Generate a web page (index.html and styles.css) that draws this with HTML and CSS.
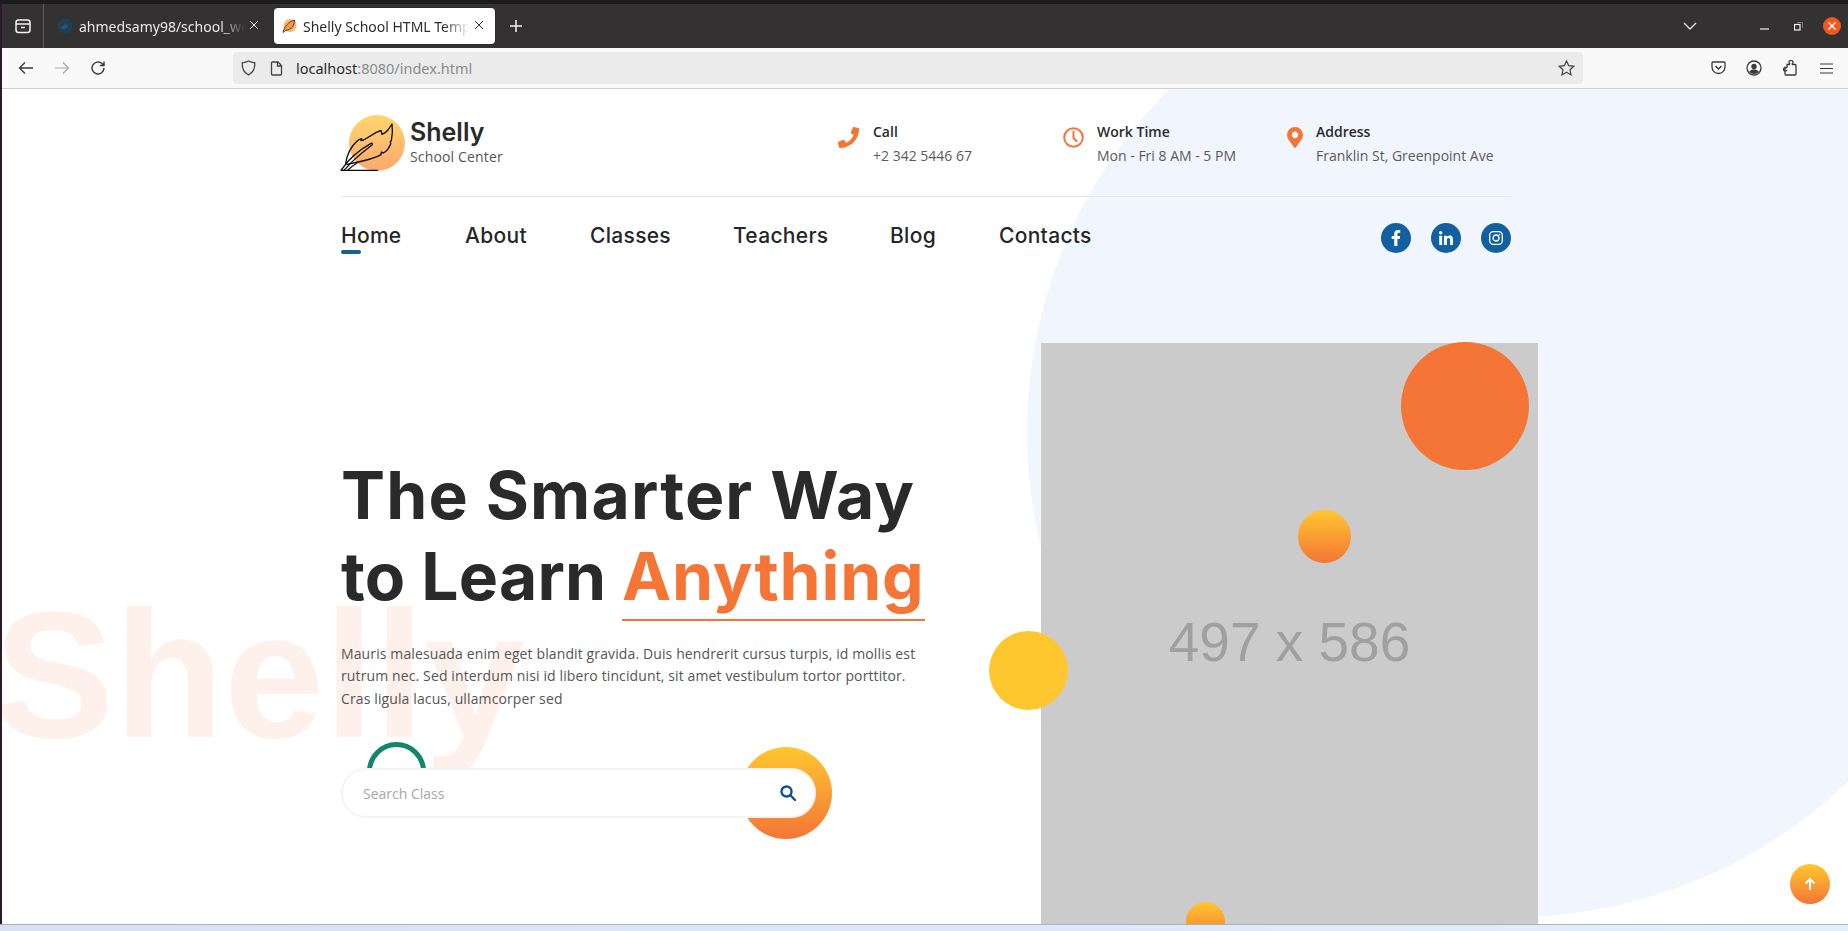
FILE: index.html
```html
<!DOCTYPE html>
<html lang="en">
<head>
<meta charset="utf-8">
<title>Shelly School HTML Template</title>
<link rel="stylesheet" href="styles.css">
</head>
<body>
<div class="topline"></div>
<div class="window">
  <div class="tabbar">
    <div class="tabmgr">
      <svg width="16" height="16" viewBox="0 0 16 16" fill="none" stroke="#f4f4f4" stroke-width="1.5"><rect x="1" y="2" width="14" height="12.5" rx="2.5"/><path d="M1 6h14M6 9.5h4"/></svg>
    </div>
    <div class="tab tab-inactive">
      <svg class="tabicon" width="16" height="16" viewBox="0 0 16 16"><circle cx="8" cy="8" r="7.5" fill="#1d4056"/><path d="M3.5 9c2 3.5 6 3 8.500-3l-2.800 1.500-1.200-3.200-1 3z" fill="#2f5670"/></svg>
      <span class="tabtext">ahmedsamy98/school_website</span>
      <svg class="tabclose" width="10" height="10" viewBox="0 0 10 10" stroke="#e8e8e8" stroke-width="1"><path d="M1 1l8 8M9 1l-8 8"/></svg>
    </div>
    <div class="tab tab-active">
      <svg class="tabicon" width="16" height="16" viewBox="0 0 16 16"><circle cx="9" cy="7.500" r="6.500" fill="#fdb96b"/><path d="M2 14.500C3 9 7 4 13.500 2 13.500 8 10 12 4.500 12.500L2 14.500z" fill="#f59a45" stroke="#222" stroke-width=".8"/></svg>
      <span class="tabtext tabtext-dark">Shelly School HTML Template</span>
      <svg class="tabclose" width="10" height="10" viewBox="0 0 10 10" stroke="#333" stroke-width="1"><path d="M1 1l8 8M9 1l-8 8"/></svg>
    </div>
    <svg class="newtab" width="14" height="14" viewBox="0 0 14 14" stroke="#f4f4f4" stroke-width="1.500"><path d="M7 1v12M1 7h12"/></svg>
    <div class="winctrl">
      <svg class="chev" width="14" height="8" viewBox="0 0 14 8" fill="none" stroke="#e8e8e8" stroke-width="1.300"><path d="M1 1l6 6 6-6"/></svg>
      <svg class="winmin" width="9" height="2" viewBox="0 0 9 2"><rect width="9" height="1.200" y=".4" fill="#f0f0f0"/></svg>
      <svg class="winmax" width="9" height="9" viewBox="0 0 9 9" fill="none" stroke="#f0f0f0"><rect x=".5" y="2.500" width="5.500" height="5.500" stroke-width="1.200"/><path d="M3 .5h5.500V6" stroke-width=".6" stroke="#aaa"/></svg>
      <div class="winclose"><svg width="8" height="8" viewBox="0 0 8 8" stroke="#fff" stroke-width="1.300"><path d="M.5.5l7 7M7.500.5l-7 7"/></svg></div>
    </div>
  </div>

  <div class="toolbar">
    <div class="navbtns">
      <svg width="16" height="14" viewBox="0 0 16 14" fill="none" stroke="#3a3a3a" stroke-width="1.300"><path d="M15 7H1.500M7 1.500L1.500 7 7 12.500"/></svg>
      <svg width="16" height="14" viewBox="0 0 16 14" fill="none" stroke="#a8a8a8" stroke-width="1.200"><path d="M1 7h13.500M9 1.500L14.500 7 9 12.500"/></svg>
      <svg width="16" height="16" viewBox="0 0 16 16" fill="none" stroke="#3a3a3a" stroke-width="1.400"><path d="M14 8a6 6 0 1 1-2-4.500L14 5.500M14 1.500v4h-4"/></svg>
    </div>
    <div class="urlbar">
      <svg class="urlshield" width="15" height="16" viewBox="0 0 15 16" fill="none" stroke="#444" stroke-width="1.300"><path d="M7.500 1C5.500 2.200 3.500 2.600 1.200 2.800 1 8 2.500 12.500 7.500 15c5-2.500 6.500-7 6.300-12.200C11.500 2.600 9.500 2.200 7.500 1z"/></svg>
      <svg class="urldoc" width="13" height="15" viewBox="0 0 13 15" fill="none" stroke="#444" stroke-width="1.300"><path d="M2.500 1H8l3.500 3.500V13a1 1 0 0 1-1 1h-8a1 1 0 0 1-1-1V2a1 1 0 0 1 1-1z"/><path d="M7.500 1v4h4"/></svg>
      <span class="urltext">localhost<span class="urlrest">:8080/index.html</span></span>
      <svg class="urlstar" width="17" height="16" viewBox="0 0 17 16" fill="none" stroke="#444" stroke-width="1.200"><path d="M8.500 1l2.200 4.700 5.100.6-3.800 3.500 1 5.100-4.500-2.600L4 14.900l1-5.100L1.200 6.300l5.100-.6z"/></svg>
    </div>
    <div class="tools">
      <svg width="15" height="14" viewBox="0 0 15 14" fill="none" stroke="#3a3a3a" stroke-width="1.300"><path d="M2 1h11a1 1 0 0 1 1 1v4a6.500 6.500 0 0 1-13 0V2a1 1 0 0 1 1-1z"/><path d="M4.500 5l3 3 3-3" stroke-width="1.500"/></svg>
      <svg width="16" height="16" viewBox="0 0 16 16"><circle cx="8" cy="8" r="7" fill="none" stroke="#3a3a3a" stroke-width="1.300"/><circle cx="8" cy="6.500" r="2.700" fill="#3a3a3a"/><path d="M3.200 12c1-2 3-2.500 4.800-2.500s3.800.5 4.800 2.500c-2.500 2.500-7 2.500-9.600 0z" fill="#3a3a3a"/></svg>
      <svg width="14" height="16" viewBox="0 0 14 16" fill="none" stroke="#3a3a3a" stroke-width="1.300"><path d="M2 6.500V14a1 1 0 0 0 1 1h9a1 1 0 0 0 1-1V5.500a1 1 0 0 0-1-1H9.500c-1-.5.500-1.300.500-2.200a2 2 0 0 0-4 0c0 .9 1.500 1.700.5 2.200H4v3c-.5 1-1.500-.2-2.500.3a1.600 1.600 0 0 0 0 3c1 .5 2-.7 2.500.3"/></svg>
      <svg width="13" height="11" viewBox="0 0 13 11" stroke="#3a3a3a" stroke-width="1.200"><path d="M0 1h13M0 5.500h13M0 10h13"/></svg>
    </div>
  </div>

  <div class="page">
    <div class="bg-circle"></div>
    <div class="bg-word">Shelly</div>

    <div class="container">
      <header class="topbar">
        <a class="logo">
          <div class="logo-disc"></div>
          <svg class="logo-feather" width="80" height="70" viewBox="0 0 240 210" fill="none" stroke="#0e0e0e" stroke-width="4" stroke-linejoin="round" stroke-linecap="round">
            <path d="M19 181h108"/>
            <path d="M32 160c4-25 16-50 32-65 5-5 10-8 16-9l-2 6 8-2 38-23c5-2 11-4 14-6l3 12c5-2 12-5 18-13l12-18c2 14 2 32-2 50l-3 3 1 6c-4 12-12 22-22 28l-6-3-1 8c-14 8-34 14-55 19-19 5-37 8-47 10"/>
            <path d="M20 178c-2 2-2 3 0 3h7c20-24 50-50 84-76 2-2 1-6-3-5-32 18-66 46-88 78z"/>
            <path d="M38 181c8-8 18-16 28-22"/>
          </svg>
          <div class="logo-text">
            <div class="logo-name">Shelly</div>
            <div class="logo-sub">School Center</div>
          </div>
        </a>
        <div class="contacts">
          <div class="contact contact-call">
            <div class="contact-icon"><svg width="21" height="21" viewBox="0 0 512 512" fill="#f47536"><path d="M493.400 24.600l-104-24c-11.300-2.600-22.900 3.300-27.500 13.900l-48 112c-4.200 9.800-1.400 21.300 6.900 28l60.600 49.600c-36 76.700-98.900 140.500-177.200 177.200l-49.600-60.600c-6.800-8.300-18.200-11.100-28-6.900l-112 48C3.900 366.500-2 378.100.6 389.400l24 104C27.100 504.200 36.700 512 48 512c256.100 0 464-207.500 464-464 0-11.200-7.700-20.900-18.600-23.400z"/></svg></div>
            <div><div class="contact-title">Call</div><div class="contact-value">+2 342 5446 67</div></div>
          </div>
          <div class="contact contact-time">
            <div class="contact-icon"><svg width="21" height="21" viewBox="0 0 21 21" fill="none" stroke="#f47536" stroke-width="2"><circle cx="10.500" cy="10.500" r="9.300"/><path d="M10.500 4.500v6.500l3 3" stroke-linecap="round"/></svg></div>
            <div><div class="contact-title">Work Time</div><div class="contact-value">Mon - Fri 8 AM - 5 PM</div></div>
          </div>
          <div class="contact contact-addr">
            <div class="contact-icon"><svg width="16" height="21" viewBox="0 0 384 512" fill="#f47536"><path d="M172.268 501.670C26.970 291.031 0 269.413 0 192 0 85.961 85.961 0 192 0s192 85.961 192 192c0 77.413-26.970 99.031-172.268 309.670-9.535 13.774-29.930 13.773-39.464 0zM192 272c44.183 0 80-35.817 80-80s-35.817-80-80-80-80 35.817-80 80 35.817 80 80 80z"/></svg></div>
            <div><div class="contact-title">Address</div><div class="contact-value">Franklin St, Greenpoint Ave</div></div>
          </div>
        </div>
      </header>

      <nav class="mainnav">
        <ul class="menu">
          <li class="menu-item menu-current">Home</li>
          <li class="menu-item">About</li>
          <li class="menu-item">Classes</li>
          <li class="menu-item">Teachers</li>
          <li class="menu-item">Blog</li>
          <li class="menu-item">Contacts</li>
        </ul>
        <div class="social">
          <a class="social-link"><svg width="10" height="16" viewBox="0 0 320 512" fill="#fff"><path d="M279.140 288l14.220-92.660h-88.910v-60.130c0-25.350 12.420-50.060 52.240-50.060h40.420V6.260S260.430 0 225.360 0c-73.220 0-121.080 44.380-121.080 124.720v70.620H22.890V288h81.390v224h100.170V288z"/></svg></a>
          <a class="social-link"><svg width="14" height="14" viewBox="0 0 448 448" fill="#fff"><path d="M100.280 448H7.400V148.900h92.880zM53.790 108.100C24.090 108.100 0 83.500 0 53.800a53.790 53.790 0 0 1 107.580 0c0 29.700-24.100 54.300-53.790 54.300zM447.900 448h-92.680V302.400c0-34.700-.7-79.200-48.290-79.200-48.290 0-55.690 37.700-55.690 76.700V448h-92.780V148.900h89.080v40.800h1.300c12.400-23.500 42.690-48.300 87.880-48.300 94 0 111.280 61.900 111.280 142.300V448z"/></svg></a>
          <a class="social-link"><svg width="14" height="14" viewBox="0 0 14 14" fill="none" stroke="#fff" stroke-width="1.300"><rect x=".7" y=".7" width="12.600" height="12.600" rx="3.500"/><circle cx="7" cy="7" r="3"/><circle cx="10.600" cy="3.400" r=".5" fill="#fff" stroke-width=".5"/></svg></a>
        </div>
      </nav>

      <section class="hero">
        <div class="hero-copy">
          <h1 class="hero-title"><span class="hero-line1">The Smarter Way</span><br><span class="hero-line2">to Learn</span> <span class="hero-accent">Anything</span></h1>
          <p class="hero-text">Mauris malesuada enim eget blandit gravida. Duis hendrerit cursus turpis, id mollis est rutrum nec. Sed interdum nisi id libero tincidunt, sit amet vestibulum tortor porttitor. Cras ligula lacus, ullamcorper sed</p>
          <div class="search-wrap">
            <div class="ring"></div>
            <div class="search-disc"></div>
            <form class="search">
              <span class="search-placeholder">Search Class</span>
              <svg class="search-icon" width="16" height="16" viewBox="0 0 16 16" fill="none" stroke="#124f96" stroke-width="2.400"><circle cx="6.500" cy="6.500" r="5"/><path d="M10.200 10.200L15 15" stroke-linecap="round"/></svg>
            </form>
          </div>
        </div>
        <div class="hero-image">
          <span class="hero-image-label">497 x 586</span>
          <div class="dot dot-orange"></div>
          <div class="dot dot-mid"></div>
          <div class="dot dot-yellow"></div>
          <div class="dot dot-low"></div>
        </div>
      </section>
    </div>

    <a class="scrolltop"><svg width="14" height="14" viewBox="0 0 14 14" fill="none" stroke="#fff" stroke-width="2"><path d="M7 13V2M2.500 6.500L7 2l4.500 4.500"/></svg></a>
  </div>
</div>
<div class="desktop"></div>
</body>
</html>
```

FILE: styles.css
```css
* { box-sizing: border-box; }
html, body { margin: 0; height: 100%; }
body {
  display: flex;
  flex-direction: column;
  height: 100vh;
  overflow: hidden;
  background: #fff;
  font-family: "Open Sans", "Liberation Sans", sans-serif;
  color: #555;
}
.topline { height: 4px; background: #1c1c1c; flex: none; }
.window {
  flex: 1;
  min-height: 0;
  display: flex;
  flex-direction: column;
  border-left: 2px solid #2c1a2a;
}
.desktop {
  height: 7px;
  flex: none;
  border-top: 1px solid #aeb3bb;
  background: linear-gradient(90deg, #d8e0f2, #dbe6f6 40%, #dfe8f8 60%, #e3f0f9);
}

/* browser tab strip */
.tabbar {
  height: 44px;
  flex: none;
  background: #333132;
  display: flex;
  align-items: center;
  position: relative;
}
.tabmgr {
  width: 42px;
  height: 44px;
  display: flex;
  align-items: center;
  justify-content: center;
  border-right: 1px solid #5c5b5c;
  margin-right: 11px;
}
.tab {
  height: 36px;
  display: flex;
  align-items: center;
  border-radius: 4px;
  font-family: "Noto Sans", sans-serif;
  font-size: 14px;
  position: relative;
}
.tab-inactive { width: 207px; padding-left: 2px; margin-right: 12px; }
.tab-active { width: 221px; padding-left: 7px; background: #fff; box-shadow: 0 0 2px rgba(0,0,0,.4); }
.tabicon { flex: none; margin-right: 6px; }
.tabtext {
  white-space: nowrap;
  overflow: hidden;
  color: #e8e8e8;
  width: 166px;
  -webkit-mask-image: linear-gradient(90deg, #000 85%, transparent);
  mask-image: linear-gradient(90deg, #000 85%, transparent);
}
.tabtext-dark { color: #2c2c2c; }
.tabclose { position: absolute; right: 11px; top: 12px; }
.tab-inactive .tabclose { right: 3px; }
.newtab { margin-left: 14px; }
.winctrl { margin-left: auto; display: flex; align-items: center; }
.chev { margin-right: 63px; }
.winmin { margin-right: 25px; margin-top: 6px; }
.winmax { margin-right: 20px; }
.winclose {
  width: 18px;
  height: 18px;
  border-radius: 50%;
  background: #ef5a20;
  display: flex;
  align-items: center;
  justify-content: center;
  margin-right: 7px;
}

/* browser toolbar */
.toolbar {
  height: 41px;
  flex: none;
  background: #f9f9f9;
  border-bottom: 1px solid #cfcfcf;
  display: flex;
  align-items: center;
}
.navbtns { display: flex; align-items: center; gap: 20px; width: 231px; padding-left: 16px; }
.urlbar {
  width: 1350px;
  height: 32px;
  background: #ebebeb;
  border-radius: 4px;
  display: flex;
  align-items: center;
  padding-left: 8px;
}
.urlshield { margin-right: 14px; }
.urldoc { margin-right: 13px; }
.urltext { font-family: "Noto Sans", sans-serif; font-size: 14.500px; color: #2b2b2b; }
.urlrest { color: #8c8c8c; }
.urlstar { margin-left: auto; margin-right: 8px; }
.tools {
  display: grid;
  grid-template-columns: repeat(4, 36px);
  justify-items: center;
  align-items: center;
  margin-left: 117px;
}

/* page */
.page { flex: 1; min-height: 0; position: relative; overflow: hidden; background: #fff; }
.bg-circle {
  position: absolute;
  left: 1025px;
  top: -142px;
  width: 970px;
  height: 970px;
  border-radius: 50%;
  background: #f1f6fe;
}
.bg-word {
  position: absolute;
  left: -8px;
  top: 496px;
  font-family: "Liberation Sans", Arial, sans-serif;
  font-weight: 700;
  font-size: 180px;
  line-height: 1;
  color: #fef0eb;
}
.container { position: relative; width: 1170px; margin-left: 339px; }

.topbar {
  height: 108px;
  border-bottom: 1px solid #e8e8e8;
  display: flex;
  padding-top: 26px;
}
.logo { position: relative; display: flex; padding-left: 69px; height: 56px; }
.logo-disc {
  position: absolute;
  left: 8px;
  top: 0;
  width: 56px;
  height: 56px;
  border-radius: 50%;
  background: linear-gradient(180deg, #ffd76d, #fda76f);
}
.logo-feather { position: absolute; left: -6px; top: -5px; }
.logo-name {
  font-family: Inter, sans-serif;
  font-weight: 600;
  font-size: 25px;
  line-height: 29px;
  color: #2a2a2a;
  margin-top: 3px;
}
.logo-sub { font-size: 14px; line-height: 20px; letter-spacing: .15px; color: #555; }

.contacts { margin-left: auto; display: flex; padding-top: 6px; }
.contact { display: flex; font-size: 14px; }
.contact-call { width: 225px; }
.contact-time { width: 224px; }
.contact-addr { width: 224px; }
.contact-call .contact-icon { width: 35px; }
.contact-time .contact-icon { width: 34px; }
.contact-addr .contact-icon { width: 29px; }
.contact-icon { padding-top: 6px; }
.contact-title { font-weight: 600; color: #2a2a2a; line-height: 22px; }
.contact-value { color: #5a5a5a; line-height: 22px; margin-top: 2px; }

.mainnav {
  display: flex;
  justify-content: space-between;
  padding-top: 27px;
  height: 57px;
}
.menu {
  list-style: none;
  margin: 0;
  padding: 0;
  display: grid;
  grid-template-columns: 124px 125px 143px 157px 109px auto;
}
.menu-item {
  font-family: Inter, sans-serif;
  font-weight: 500;
  font-size: 21px;
  letter-spacing: .3px;
  line-height: 24px;
  color: #262626;
}
.menu-current { position: relative; }
.menu-current::after {
  content: "";
  position: absolute;
  left: 0;
  top: 26px;
  width: 20px;
  height: 4px;
  border-radius: 2px;
  background: #136486;
}
.social { display: flex; gap: 20px; margin-top: -1px; }
.social-link {
  width: 30px;
  height: 30px;
  border-radius: 50%;
  background: #12609f;
  display: flex;
  align-items: center;
  justify-content: center;
}

/* hero */
.hero { display: flex; }
.hero-copy { width: 585px; flex: none; padding-top: 201px; }
.hero-title {
  margin: 0;
  font-family: Inter, sans-serif;
  font-weight: 700;
  font-size: 66px;
  line-height: 81px;
  color: #2a2a2a;
}
.hero-line1 { letter-spacing: 1.150px; }
.hero-line2 { letter-spacing: .2px; }
.hero-accent {
  color: #f47536;
  display: inline-block;
  border-bottom: 2px solid #f47536;
  padding-bottom: 8px;
  line-height: 70px;
  letter-spacing: .8px;
}
.hero-text {
  margin: 22px 0 0;
  font-size: 14px;
  line-height: 22.400px;
  letter-spacing: .12px;
  color: #555;
  width: 585px;
}
.search-wrap { position: relative; margin-top: 58px; width: 475px; }
.ring {
  position: absolute;
  left: 26px;
  top: -26px;
  width: 59px;
  height: 59px;
  border-radius: 50%;
  border: 5px solid #14846c;
}
.search-disc {
  position: absolute;
  left: 399px;
  top: -21px;
  width: 92px;
  height: 92px;
  border-radius: 50%;
  background: linear-gradient(180deg, #ffc72f, #f47536);
}
.search {
  position: relative;
  height: 50px;
  border: 2px solid #f4f4f4;
  border-radius: 25px;
  background: #fff;
  display: flex;
  align-items: center;
  justify-content: space-between;
  padding: 0 18px 0 20px;
}
.search-placeholder { font-size: 14px; color: #a8a8a8; }
.hero-image {
  position: relative;
  width: 497px;
  height: 586px;
  flex: none;
  margin-left: 115px;
  margin-top: 89px;
  background: #cbcbcb;
  display: flex;
  align-items: center;
  justify-content: center;
}
.hero-image-label {
  font-family: "Liberation Sans", Arial, sans-serif;
  font-size: 55px;
  color: #a0a0a0;
  margin-top: 11px;
}
.dot { position: absolute; border-radius: 50%; }
.dot-orange { left: 360px; top: -1px; width: 128px; height: 128px; background: #f47536; }
.dot-mid { left: 257px; top: 167px; width: 53px; height: 53px; background: linear-gradient(180deg, #ffc72f, #f47536); }
.dot-yellow { left: -52px; top: 288px; width: 79px; height: 79px; background: #ffc72f; }
.dot-low { left: 145px; top: 559px; width: 39px; height: 39px; background: linear-gradient(180deg, #ffc72f, #f47536); }
.scrolltop {
  position: absolute;
  left: 1788px;
  top: 775px;
  width: 40px;
  height: 40px;
  border-radius: 50%;
  background: linear-gradient(180deg, #ffc72f, #f47536);
  display: flex;
  align-items: center;
  justify-content: center;
}
```
